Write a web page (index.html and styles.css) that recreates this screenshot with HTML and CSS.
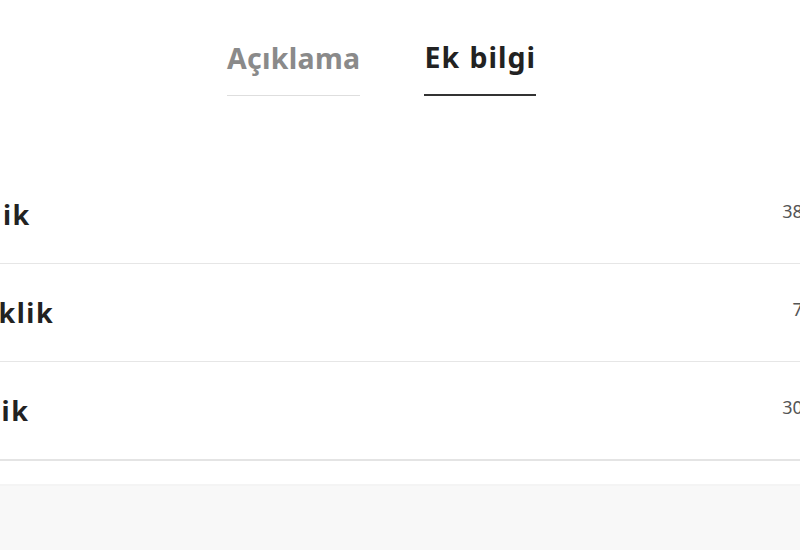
FILE: index.html
```html
<!DOCTYPE html>
<html lang="tr">
<head>
<meta charset="utf-8">
<title>Ek bilgi</title>
<link rel="stylesheet" href="styles.css">
</head>
<body>
<main class="product-tabs">
  <nav class="tabs">
    <a class="tab">Açıklama</a>
    <a class="tab tab-active">Ek bilgi</a>
  </nav>
  <section class="specs">
    <div class="spec-row">
      <span class="spec-label">Genişlik</span>
      <span class="spec-value">38 cm</span>
    </div>
    <div class="spec-row">
      <span class="spec-label">Yükseklik</span>
      <span class="spec-value">7 cm</span>
    </div>
    <div class="spec-row">
      <span class="spec-label">Derinlik</span>
      <span class="spec-value">30 cm</span>
    </div>
  </section>
</main>
<footer class="footer"></footer>
</body>
</html>
```
FILE: styles.css
```css
html, body {
  margin: 0;
  padding: 0;
  background: #ffffff;
  overflow: hidden;
  height: 100%;
}

body {
  font-family: "Noto Sans", "DejaVu Sans", sans-serif;
  color: #222;
}

.product-tabs {
  width: 800px;
  overflow: hidden;
}

.tabs {
  display: flex;
  align-items: flex-end;
  gap: 64px;
  padding: 38px 0 0 227px;
}

.tab {
  font-size: 28.5px;
  font-weight: 700;
  line-height: 38px;
  letter-spacing: 0.3px;
  color: #8a8a8a;
  padding-bottom: 18px;
  border-bottom: 1px solid #dedede;
}

.tab-active {
  color: #222222;
  letter-spacing: 1px;
  word-spacing: 1px;
  border-bottom: 2px solid #333333;
}

.specs {
  margin: 70px -33px 0 -89px;
}

.spec-row {
  display: flex;
  align-items: center;
  justify-content: space-between;
  height: 97px;
  border-bottom: 1px solid #e6e6e6;
}

.spec-row:last-child {
  border-bottom: 2px solid #e4e4e4;
}

.spec-label {
  font-size: 27px;
  font-weight: 700;
  letter-spacing: 1.5px;
  color: #222;
}

.spec-value {
  font-size: 18px;
  color: #555;
  margin-top: -8px;
}

.footer {
  margin-top: 23px;
  height: 100px;
  background: #f8f8f8;
  border-top: 2px solid #f4f4f4;
}
```
